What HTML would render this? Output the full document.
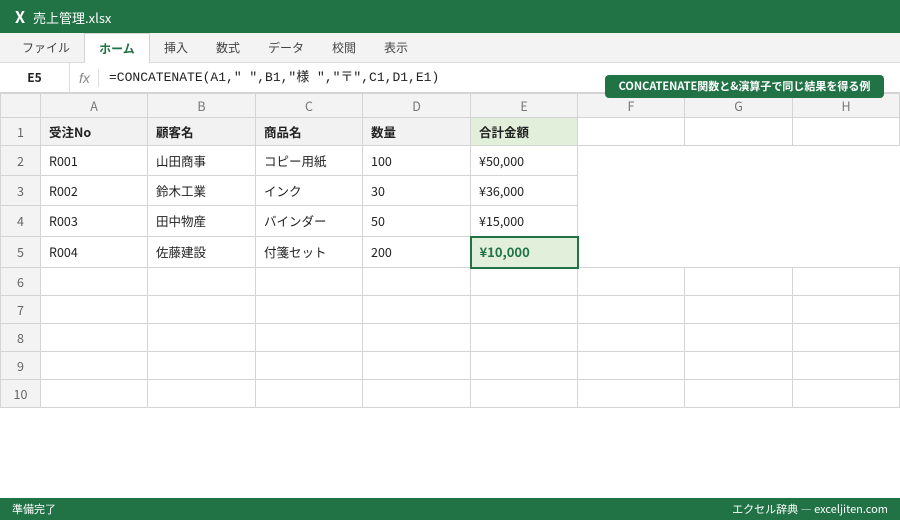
<!DOCTYPE html>
<html><head><meta charset="utf-8"><style>
*{margin:0;padding:0;box-sizing:border-box}
body{width:900px;height:520px;overflow:hidden;background:#fff;font-family:"Noto Sans CJK JP","Liberation Sans",sans-serif;position:relative;color:#222}
.title{position:absolute;left:0;top:0;width:900px;height:33px;background:#217346;color:#fff;font-size:13px;line-height:33px;padding-left:15px}
.title b{font-size:16px;margin-right:8px}
.rib{position:absolute;top:33px;left:0;width:900px;height:30px;background:#f3f3f3;border-bottom:1px solid #ddd}
.tab{position:absolute;top:0;height:30px;line-height:30px;font-size:12px;color:#444}
.tab.act{background:#fff;border:1px solid #d4d4d4;border-bottom:none;color:#217346;font-weight:bold;height:31px;text-align:center}
.fb{position:absolute;top:63px;left:0;width:900px;height:30px;background:#fff;border-bottom:1px solid #d4d4d4}
.nb{position:absolute;left:0;top:0;width:70px;height:30px;line-height:30px;text-align:center;font-size:12px;font-weight:bold;border-right:1px solid #ddd}
.fx{position:absolute;left:79px;top:0;line-height:30px;font-style:italic;color:#888;font-size:14px;font-family:"Liberation Sans",sans-serif}
.fxl{position:absolute;left:98px;top:6px;height:18px;border-left:1px solid #ddd}
.form{position:absolute;left:109px;top:0;line-height:30px;font-family:"Liberation Mono","Noto Sans CJK JP",monospace;font-size:13px}
.badge{position:absolute;left:605px;top:75px;width:279px;height:23px;background:#217346;color:#fff;border-radius:4px;font-size:11px;font-weight:bold;text-align:center;line-height:23px;z-index:5}
table{position:absolute;left:0;top:93px;border-collapse:collapse;table-layout:fixed;font-size:12.5px}
td{border:1px solid #d4d4d4;padding:0 0 0 8px;white-space:nowrap;line-height:16px}
tr.h td{background:#f3f3f3;text-align:center;color:#777;padding:0;font-weight:normal}
td.r{background:#f3f3f3 !important;text-align:center;color:#666;padding:0;font-weight:normal !important}
tr.one td{background:#f2f2f2;font-weight:bold}
tr.one td.g{background:#e2efda}
tr.one td.w{background:#fff}
td.n{border:none}
td.sel{border:2px solid #217346;background:#e2efda;color:#217346;font-weight:bold;font-size:13px}
.st{position:absolute;left:0;top:498px;width:900px;height:22px;background:#217346;color:#fff;font-size:11px;line-height:22px;padding:0 12px}
.st span{float:right}
</style></head><body>
<div class="title"><b>X</b>売上管理.xlsx</div>
<div class="rib">
<div class="tab" style="left:22px">ファイル</div>
<div class="tab act" style="left:84px;width:66px">ホーム</div>
<div class="tab" style="left:164px">挿入</div>
<div class="tab" style="left:216px">数式</div>
<div class="tab" style="left:268px">データ</div>
<div class="tab" style="left:332px">校閲</div>
<div class="tab" style="left:384px">表示</div>
</div>
<div class="fb"><div class="nb">E5</div><div class="fx">fx</div><div class="fxl"></div><div class="form">=CONCATENATE(A1," ",B1,"様 ","〒",C1,D1,E1)</div></div>
<div class="badge">CONCATENATE関数と&amp;演算子で同じ結果を得る例</div>
<table>
<colgroup><col style="width:40px"><col style="width:107px"><col style="width:108px"><col style="width:107px"><col style="width:108px"><col style="width:107px"><col style="width:107px"><col style="width:108px"><col style="width:107px"></colgroup>
<tr class="h" style="height:24px"><td></td><td>A</td><td>B</td><td>C</td><td>D</td><td>E</td><td>F</td><td>G</td><td>H</td></tr>
<tr class="one" style="height:28px"><td class="r">1</td><td>受注No</td><td>顧客名</td><td>商品名</td><td>数量</td><td class="g">合計金額</td><td class="w"></td><td class="w"></td><td class="w"></td></tr>
<tr style="height:30px"><td class="r">2</td><td>R001</td><td>山田商事</td><td>コピー用紙</td><td>100</td><td>¥50,000</td><td class="n"></td><td class="n"></td><td class="n"></td></tr>
<tr style="height:30px"><td class="r">3</td><td>R002</td><td>鈴木工業</td><td>インク</td><td>30</td><td>¥36,000</td><td class="n"></td><td class="n"></td><td class="n"></td></tr>
<tr style="height:31px"><td class="r">4</td><td>R003</td><td>田中物産</td><td>バインダー</td><td>50</td><td>¥15,000</td><td class="n"></td><td class="n"></td><td class="n"></td></tr>
<tr style="height:31px"><td class="r">5</td><td>R004</td><td>佐藤建設</td><td>付箋セット</td><td>200</td><td class="sel">¥10,000</td><td class="n"></td><td class="n"></td><td class="n"></td></tr>
<tr style="height:28px"><td class="r">6</td><td></td><td></td><td></td><td></td><td></td><td></td><td></td><td></td></tr>
<tr style="height:28px"><td class="r">7</td><td></td><td></td><td></td><td></td><td></td><td></td><td></td><td></td></tr>
<tr style="height:28px"><td class="r">8</td><td></td><td></td><td></td><td></td><td></td><td></td><td></td><td></td></tr>
<tr style="height:28px"><td class="r">9</td><td></td><td></td><td></td><td></td><td></td><td></td><td></td><td></td></tr>
<tr style="height:28px"><td class="r">10</td><td></td><td></td><td></td><td></td><td></td><td></td><td></td><td></td></tr>
</table>
<div class="st">準備完了<span>エクセル辞典 ― exceljiten.com</span></div>
</body></html>
